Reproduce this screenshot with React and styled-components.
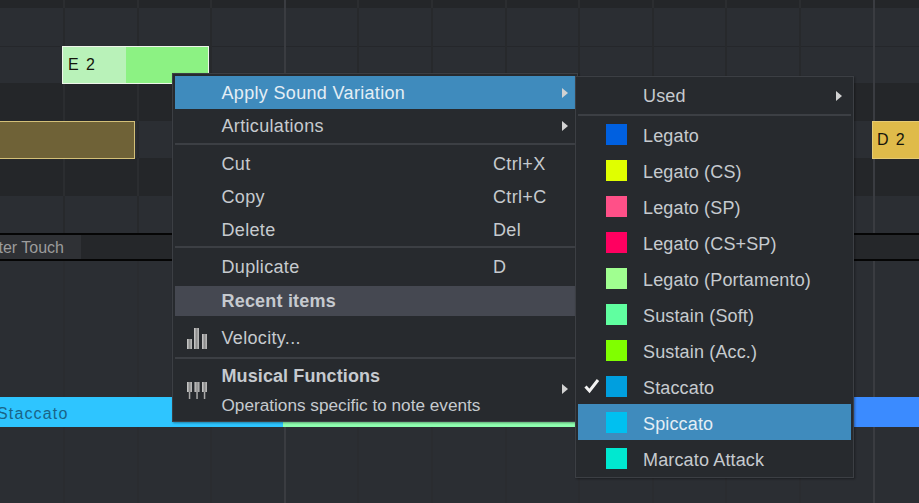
import React from 'react';
import styled, { createGlobalStyle } from 'styled-components';

const GlobalStyle = createGlobalStyle`
  html, body {
    margin: 0;
    padding: 0;
    background: #2b2e33;
  }
  body {
    font-family: "Liberation Sans", Arial, sans-serif;
    overflow: hidden;
  }
`;

const Stage = styled.div`
  position: relative;
  width: 919px;
  height: 503px;
  overflow: hidden;
  background: #2b2e33;
`;

const Rows = styled.div`
  display: flex;
  flex-direction: column;
  height: 100%;
`;

const Band = styled.div`
  flex: ${({ $h }) => ($h ? `0 0 ${$h}px` : '1')};
  background: ${({ $dark }) => ($dark ? '#242629' : '#2b2e33')};
  box-shadow: ${({ $seam }) => ($seam ? 'inset 0 1px 0 #25272b' : 'none')};
`;

const LaneTab = styled.div`
  width: 81px;
  background: #2f3135;
  display: flex;
  align-items: center;
  justify-content: flex-end;
  padding: 1px 17px 0 0;
  box-sizing: border-box;
  color: #9c9c9c;
  font-size: 16px;
  white-space: nowrap;
`;

const GridLines = styled.div`
  position: absolute;
  inset: 0 0 0 63px;
  display: flex;
  gap: 71.6px;
  pointer-events: none;
`;

const minorLine = `linear-gradient(to bottom,
  #2b2d30 0 8px,
  #27292c 8px 83px,
  #2b2d30 83px 121px,
  #27292c 121px 158px,
  #2b2d30 158px 196px,
  #27292c 196px 233px,
  #2a2c30 233px)`;

const GridLine = styled.div`
  flex: 0 0 2px;
  background: ${({ $major }) => ($major ? '#3a3c41' : minorLine)};
`;

const LaneGap = styled.div`
  position: absolute;
  left: 0;
  right: 0;
  top: 233px;
  height: 28px;
  display: flex;
  background: #25272a;
  border-top: 2px solid #050505;
  border-bottom: 2px solid #050505;
  box-sizing: border-box;
`;

const Note = styled.div`
  position: absolute;
  left: ${({ $x }) => $x}px;
  top: ${({ $y }) => $y}px;
  width: ${({ $w }) => $w}px;
  height: ${({ $h }) => $h}px;
  box-sizing: border-box;
  display: flex;
  align-items: center;
  overflow: hidden;
  background: ${({ $bg }) => $bg};
  border: ${({ $border }) => ($border ? `1.5px solid ${$border}` : 'none')};
  color: ${({ $ink }) => $ink || '#15150c'};
  font-size: 16px;
  letter-spacing: ${({ $track }) => $track || 1.4}px;
  white-space: pre;
`;

const NoteHead = styled.div`
  flex: 0 0 ${({ $w }) => $w}px;
  height: 100%;
  display: flex;
  align-items: center;
  padding-left: ${({ $pad }) => $pad}px;
  padding-top: ${({ $top }) => $top || 0}px;
  box-sizing: border-box;
  background: ${({ $bg }) => $bg || 'transparent'};
`;

const Menu = styled.div`
  position: absolute;
  left: ${({ $x }) => $x}px;
  top: ${({ $y }) => $y}px;
  width: ${({ $w }) => $w}px;
  box-sizing: border-box;
  background: #272a2e;
  border: 1px solid #3c3f44;
  box-shadow: 1px 1px 2px rgba(0, 0, 0, 0.35);
  padding: ${({ $pad }) => $pad};
  color: #c6cacf;
  font-size: 18px;
  letter-spacing: ${({ $track }) => $track}px;
  z-index: ${({ $z }) => $z};
`;

const Item = styled.div`
  position: relative;
  box-sizing: border-box;
  height: ${({ $h }) => $h}px;
  padding-top: ${({ $top }) => $top || 0}px;
  display: grid;
  grid-template-columns: ${({ $cols }) => $cols};
  align-items: center;
  background: ${({ $active }) => ($active ? '#3f8bbd' : 'transparent')};
  color: ${({ $active }) => ($active ? '#e4eef5' : 'inherit')};
  white-space: nowrap;
`;

const GroupTitle = styled(Item)`
  margin-top: 1px;
  background: #454851;
  font-weight: 700;
  letter-spacing: 0.2px;
`;

const Label = styled.span`
  padding-top: ${({ $nudge }) => $nudge || 0}px;
`;

const Divider = styled.div`
  height: 2px;
  margin: ${({ $m }) => $m};
  background: #3c3f44;
`;

const Arrow = styled.span`
  position: absolute;
  right: ${({ $right }) => $right}px;
  top: 50%;
  transform: translateY(-50%);
  border-left: 6px solid #d2d2d2;
  border-top: 5.5px solid transparent;
  border-bottom: 5.5px solid transparent;
`;

const IconCell = styled.span`
  display: flex;
  align-items: center;
  justify-content: flex-start;
  padding-left: 12px;
`;

const Multi = styled.div`
  display: flex;
  flex-direction: column;
  gap: 8px;
  line-height: 21px;
`;

const Strong = styled.span`
  font-weight: 700;
  letter-spacing: 0.1px;
`;

const Small = styled.span`
  font-size: 17.2px;
  letter-spacing: 0;
`;

const Swatch = styled.span`
  width: 21px;
  height: 21px;
  background: ${({ $color }) => $color};
`;

const CheckSlot = styled.span`
  display: flex;
  justify-content: flex-start;
  padding-left: 6px;
`;

const BarShade = ({ id }) => (
  <defs>
    <linearGradient id={id} x1="0" x2="1" y1="0" y2="0">
      <stop offset="0" stopColor="#d0d0d0" />
      <stop offset="0.5" stopColor="#8c8c8c" />
      <stop offset="1" stopColor="#c0c0c0" />
    </linearGradient>
  </defs>
);

const VelocityIcon = () => (
  <svg width="21" height="22" viewBox="0 0 21 22">
    <BarShade id="velocityBar" />
    <rect x="0" y="11" width="5" height="10" fill="url(#velocityBar)" />
    <rect x="7" y="0" width="5" height="21" fill="url(#velocityBar)" />
    <rect x="15" y="6" width="5" height="15" fill="url(#velocityBar)" />
  </svg>
);

const KeysIcon = () => (
  <svg width="21" height="18" viewBox="0 0 21 18">
    <BarShade id="keyBar" />
    {[0, 7.5, 15].map((x) => (
      <g key={x}>
        <rect x={x} y="0" width="5" height="10" fill="url(#keyBar)" />
        <rect x={x + 1.8} y="10" width="1.5" height="7" fill="#a8a8a8" />
      </g>
    ))}
  </svg>
);

const CheckIcon = () => (
  <svg width="16" height="16" viewBox="0 0 16 16">
    <polyline points="1.5,8.5 5.5,13 14,2" fill="none" stroke="#f2f2f2" strokeWidth="3" />
  </svg>
);

const MAIN_COLS = '46.5px 271.5px 1fr';
const SUB_COLS = '28px 37px 1fr';

const variations = [
  ['Legato', '#0060e0'],
  ['Legato (CS)', '#e0ff00'],
  ['Legato (SP)', '#ff5088'],
  ['Legato (CS+SP)', '#ff0060'],
  ['Legato (Portamento)', '#a0ff90'],
  ['Sustain (Soft)', '#60ffa0'],
  ['Sustain (Acc.)', '#80ff00'],
  ['Staccato', '#009fdf', 'checked'],
  ['Spiccato', '#00c0f0', 'active'],
  ['Marcato Attack', '#00e8d0'],
];

const App = () => (
  <Stage>
    <GlobalStyle />
    <Rows>
      <Band $h={8} $dark />
      <Band $h={38} />
      <Band $h={37} $seam />
      <Band $h={38} $dark />
      <Band $h={37} />
      <Band $h={38} $dark />
      <Band />
    </Rows>
    <GridLines>
      {Array.from({ length: 12 }, (_, i) => (
        <GridLine key={i} $major={i === 3 || i === 11} />
      ))}
    </GridLines>
    <LaneGap>
      <LaneTab>ter Touch</LaneTab>
    </LaneGap>

    <Note $x={62} $y={46} $w={147} $h={37.5} $bg="#8cf283" $border="#eef5ea">
      <NoteHead $w={63} $pad={5} $top={1} $bg="#b9f2b9">E 2</NoteHead>
    </Note>
    <Note $x={-4} $y={121} $w={139} $h={37.5} $bg="#6f6237" $border="#d3c078" />
    <Note $x={872} $y={121} $w={60} $h={37.5} $bg="#dfbb4a" $border="#e6cb73">
      <NoteHead $w={50} $pad={4}>D 2</NoteHead>
    </Note>
    <Note $x={-4} $y={397} $w={287} $h={30} $bg="#2ec5ff" $ink="#1a6487" $track={1.15}>
      <NoteHead $w={100} $pad={1} $top={3}>Staccato</NoteHead>
    </Note>
    <Note $x={283} $y={397} $w={320} $h={30} $bg="#8fffb0" />
    <Note $x={840} $y={397} $w={90} $h={30} $bg="#3b8bff" />

    <Menu $x={172} $y={73} $w={406} $pad="2px" $track={0.33} $z={2}>
      <Item $h={33} $cols={MAIN_COLS} $active>
        <span /><Label $nudge={2}>Apply Sound Variation</Label><Arrow $right={7} />
      </Item>
      <Item $h={34} $cols={MAIN_COLS}>
        <span /><Label>Articulations</Label><Arrow $right={7} />
      </Item>
      <Divider $m="0 0 2px" />
      <Item $h={33} $cols={MAIN_COLS}><span /><Label $nudge={2}>Cut</Label><Label $nudge={2}>Ctrl+X</Label></Item>
      <Item $h={33} $cols={MAIN_COLS}><span /><Label $nudge={2}>Copy</Label><Label $nudge={2}>Ctrl+C</Label></Item>
      <Item $h={33} $cols={MAIN_COLS}><span /><Label $nudge={2}>Delete</Label><Label $nudge={2}>Del</Label></Item>
      <Divider $m="0 0 2px" />
      <Item $h={35} $cols={MAIN_COLS}><span /><Label>Duplicate</Label><Label>D</Label></Item>
      <GroupTitle $h={30} $cols={MAIN_COLS}><span /><span>Recent items</span></GroupTitle>
      <Item $h={41} $top={4} $cols={MAIN_COLS}>
        <IconCell><VelocityIcon /></IconCell><span>Velocity...</span>
      </Item>
      <Divider $m="0" />
      <Item $h={60} $top={3} $cols={MAIN_COLS}>
        <IconCell><KeysIcon /></IconCell>
        <Multi>
          <Strong>Musical Functions</Strong>
          <Small>Operations specific to note events</Small>
        </Multi>
        <Arrow $right={7} />
      </Item>
    </Menu>

    <Menu $x={575} $y={76} $w={279} $pad="1px 2px" $track={0.15} $z={3}>
      <Item $h={36} $cols={SUB_COLS}>
        <span /><span />
        <Label>Used</Label>
        <Arrow $right={9} />
      </Item>
      <Divider $m="0" />
      {variations.map(([name, color, state]) => (
        <Item key={name} $h={36} $cols={SUB_COLS} $active={state === 'active'}>
          <CheckSlot>{state === 'checked' && <CheckIcon />}</CheckSlot>
          <Swatch $color={color} />
          <Label $nudge={5}>{name}</Label>
        </Item>
      ))}
    </Menu>
  </Stage>
);

export default App;
